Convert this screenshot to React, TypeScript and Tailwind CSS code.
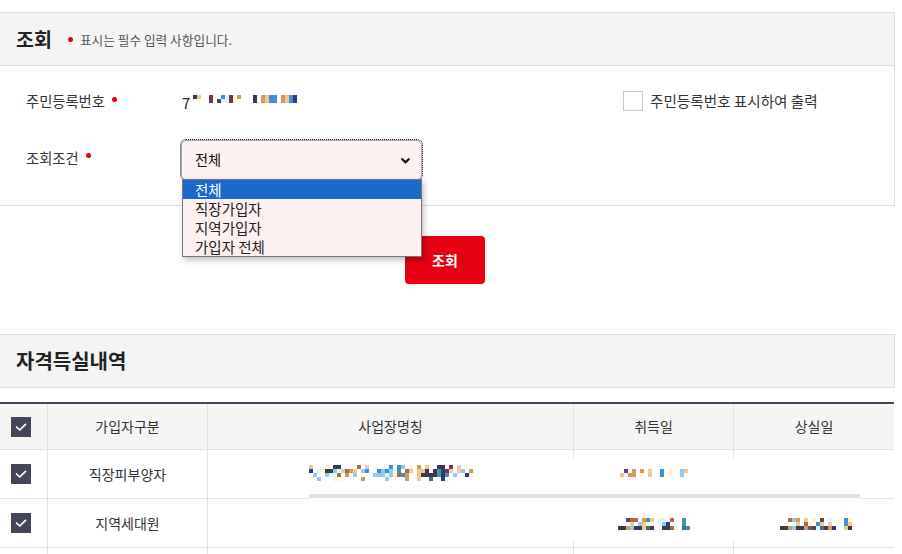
import React from 'react';

const pal: Record<string, string> = {
  d: 'bg-[#3b3b4b]',
  t: 'bg-[#d39a5a]',
  T: 'bg-[#f3c88e]',
  m: 'bg-[#6e3a4e]',
  b: 'bg-[#3d8fd0]',
  B: 'bg-[#8fcaf0]',
  c: 'bg-[#e0f8fb]',
  y: 'bg-[#fff6d2]',
  p: 'bg-[#6a3a80]',
  n: 'bg-[#2c3a8a]',
  r: 'bg-[#b06a40]',
  g: 'bg-[#c9d8c8]',
  k: 'bg-[#ecc6c0]',
  s: 'bg-[#4a6a80]',
  '.': 'bg-transparent',
};

// blurred (mosaic) personal data
const Pix: React.FC<{ rows: string[] }> = ({ rows }) => (
  <div className="flex flex-col">
    {rows.map((row, i) => (
      <div key={i} className="flex">
        {row.split('').map((ch, j) => (
          <span key={j} className={`block w-[4px] h-[4px] ${pal[ch] ?? 'bg-transparent'}`} />
        ))}
      </div>
    ))}
  </div>
);

const Dot = () => <span className="inline-block w-[5px] h-[5px] rounded-full bg-[#e60012]" />;

const Check = () => (
  <span className="flex items-center justify-center w-[20px] h-[20px] bg-[#45465a]">
    <svg width="20" height="20" viewBox="0 0 20 20">
      <polyline points="5.5,10 8.7,13 14.5,7.3" fill="none" stroke="#fff" strokeWidth="1.7" strokeLinecap="round" strokeLinejoin="round" />
    </svg>
  </span>
);

const cell = 'flex items-center justify-center border-l border-[#e3e3e3]';
const cols = 'grid grid-cols-[47px_160px_366px_160px_161px]';
const chk = 'flex items-center pl-[11px]';

export default function App() {
  return (
    <div className="w-[902px] h-[554px] overflow-hidden bg-white font-['Noto_Sans_CJK_KR',sans-serif] text-[#333]">
      <div className="pt-[12px]">
        {/* 조회 */}
        <div className="w-[895px] border-t border-r border-b border-[#dfdfdf]">
          <div className="h-[53px] bg-[#f4f4f4] border-b border-[#dfdfdf] flex items-center pl-[16px]">
            <h2 className="text-[19.5px] font-bold text-[#222]">조회</h2>
            <span className="ml-[16px] flex"><Dot /></span>
            <span className="ml-[7px] mt-[1px] text-[12.7px] text-[#555]">표시는 필수 입력 사항입니다.</span>
          </div>
          <div className="pt-[15px] pb-[25px] pl-[26px]">
            <div className="flex h-[40px] items-center">
              <div className="w-[156px] flex items-center text-[14.3px] text-[#333]">
                주민등록번호<span className="ml-[7px] mb-[4px] flex"><Dot /></span>
              </div>
              <div className="w-[441px] flex items-center">
                <span className="text-[15px] text-[#222] leading-none mt-[2px]">7</span>
                <div className="ml-[3px] -mt-[4px]">
                  <Pix rows={['dT..m..bcm.t...d.tTbb.tTbn', '....m.mccmy....d.tTbb.tTbn']} />
                </div>
              </div>
              <label className="flex items-center">
                <span className="w-[20px] h-[20px] border border-[#c8c8c8] bg-white" />
                <span className="ml-[7px] text-[14.6px] text-[#333]">주민등록번호 표시하여 출력</span>
              </label>
            </div>
            <div className="flex h-[40px] items-center mt-[19px]">
              <div className="w-[155px] flex items-center text-[14.3px] text-[#333] pb-[5px]">
                조회조건<span className="ml-[7px] mb-[4px] flex"><Dot /></span>
              </div>
              <div className="relative">
                <div className="w-[241px] h-[40px] rounded-[5px] border border-[#a9a9a9] outline outline-1 outline-dotted outline-[#111] bg-[#fdf0f0] flex items-center justify-between pl-[13px] pr-[10px]">
                  <span className="text-[14.2px] text-[#111]">전체</span>
                  <svg width="11" height="7" viewBox="0 0 11 7">
                    <polyline points="1.5,1.5 5.5,5.2 9.5,1.5" fill="none" stroke="#111" strokeWidth="2.2" />
                  </svg>
                </div>
                <ul className="absolute left-[1px] top-[39px] w-[240px] z-20 border border-[#767676] bg-[#fdf0f0] shadow-[2px_3px_6px_rgba(0,0,0,0.25)] text-[14.5px] leading-[19px] text-[#222]">
                  <li className="pl-[12px] h-[19px] bg-[#1a6acb] text-white">전체</li>
                  <li className="pl-[12px] h-[19px]">직장가입자</li>
                  <li className="pl-[12px] h-[19px]">지역가입자</li>
                  <li className="pl-[12px] h-[19px]">가입자 전체</li>
                </ul>
              </div>
            </div>
          </div>
        </div>

        <div className="mt-[30px] w-[890px] flex justify-center">
          <button className="w-[80px] h-[48px] rounded-[4px] bg-[#e60012] text-white text-[14px] font-semibold">조회</button>
        </div>

        {/* 자격득실내역 */}
        <div className="mt-[50px] w-[895px] h-[54px] border-t border-r border-b border-[#dfdfdf] bg-[#f4f4f4] flex items-center pl-[16px]">
          <h2 className="text-[20px] font-bold text-[#222]">자격득실내역</h2>
        </div>

        <div className="relative mt-[14px] w-[894px] border-t-2 border-[#45465a] text-[14px] text-[#333]">
          <div className={`${cols} h-[46px] bg-[#f5f5f5] border-b border-[#e3e3e3]`}>
            <div className={chk}><Check /></div>
            <div className={cell}>가입자구분</div>
            <div className={cell}>사업장명칭</div>
            <div className={cell}>취득일</div>
            <div className={cell}>상실일</div>
          </div>
          <div className={`${cols} h-[49px] border-b border-[#e3e3e3]`}>
            <div className={chk}><Check /></div>
            <div className={cell}>직장피부양자</div>
            <div className={cell}>
              <div className="relative z-[2] -mt-[2px]">
                <Pix rows={[
                  'T...y.dd....r.k.....b.bB.y.t.T..dd.m.k...',
                  'n.cyddBcgrtT.Bb..bBbBcbyrT.TTd.dbdmk.TB.t',
                  '.B..Bcyr.t.B....BBBcByrbt..Tddddbdb.B..ny',
                  '..B...cy.....t.....B....t..T..s..n.y.....',
                ]} />
              </div>
            </div>
            <div className={cell}>
              <div className="relative z-[2] -mt-[2px]">
                <Pix rows={['.p.t.t.T..b.y..BT', 'Tctt.y.T..b.y..B.']} />
              </div>
            </div>
            <div className={cell} />
          </div>
          <div className={`${cols} h-[49px] border-b border-[#e3e3e3]`}>
            <div className={chk}><Check /></div>
            <div className={cell}>지역세대원</div>
            <div className={cell} />
            <div className={cell}>
              <div className="relative z-[2] mt-[1px]">
                <Pix rows={['..prr.tbT.cc.r..b.', '...T.BTy..cBn...b.', 'ddtBddTsd..ddrc.sb']} />
              </div>
            </div>
            <div className={cell}>
              <div className="relative z-[2] mt-[1px] ml-[3px]">
                <Pix rows={['..rBt.T.y.m.c...by', '...cT.ry.bT.k...bT', 'ddtBddtsmcsdtd..Td']} />
              </div>
            </div>
          </div>
          <div className={`${cols} h-[49px]`}>
            <div />
            <div className={cell} />
            <div className={cell} />
            <div className={cell} />
            <div className={cell} />
          </div>

          {/* scroll area overlay in 사업장명칭 */}
          <div className="absolute left-[309px] top-[54px] w-[551px] h-[83px] bg-white z-[1]">
            <div className="mt-[36px] h-[4px] bg-[#e0e1e5]" />
          </div>
        </div>
      </div>
    </div>
  );
}
